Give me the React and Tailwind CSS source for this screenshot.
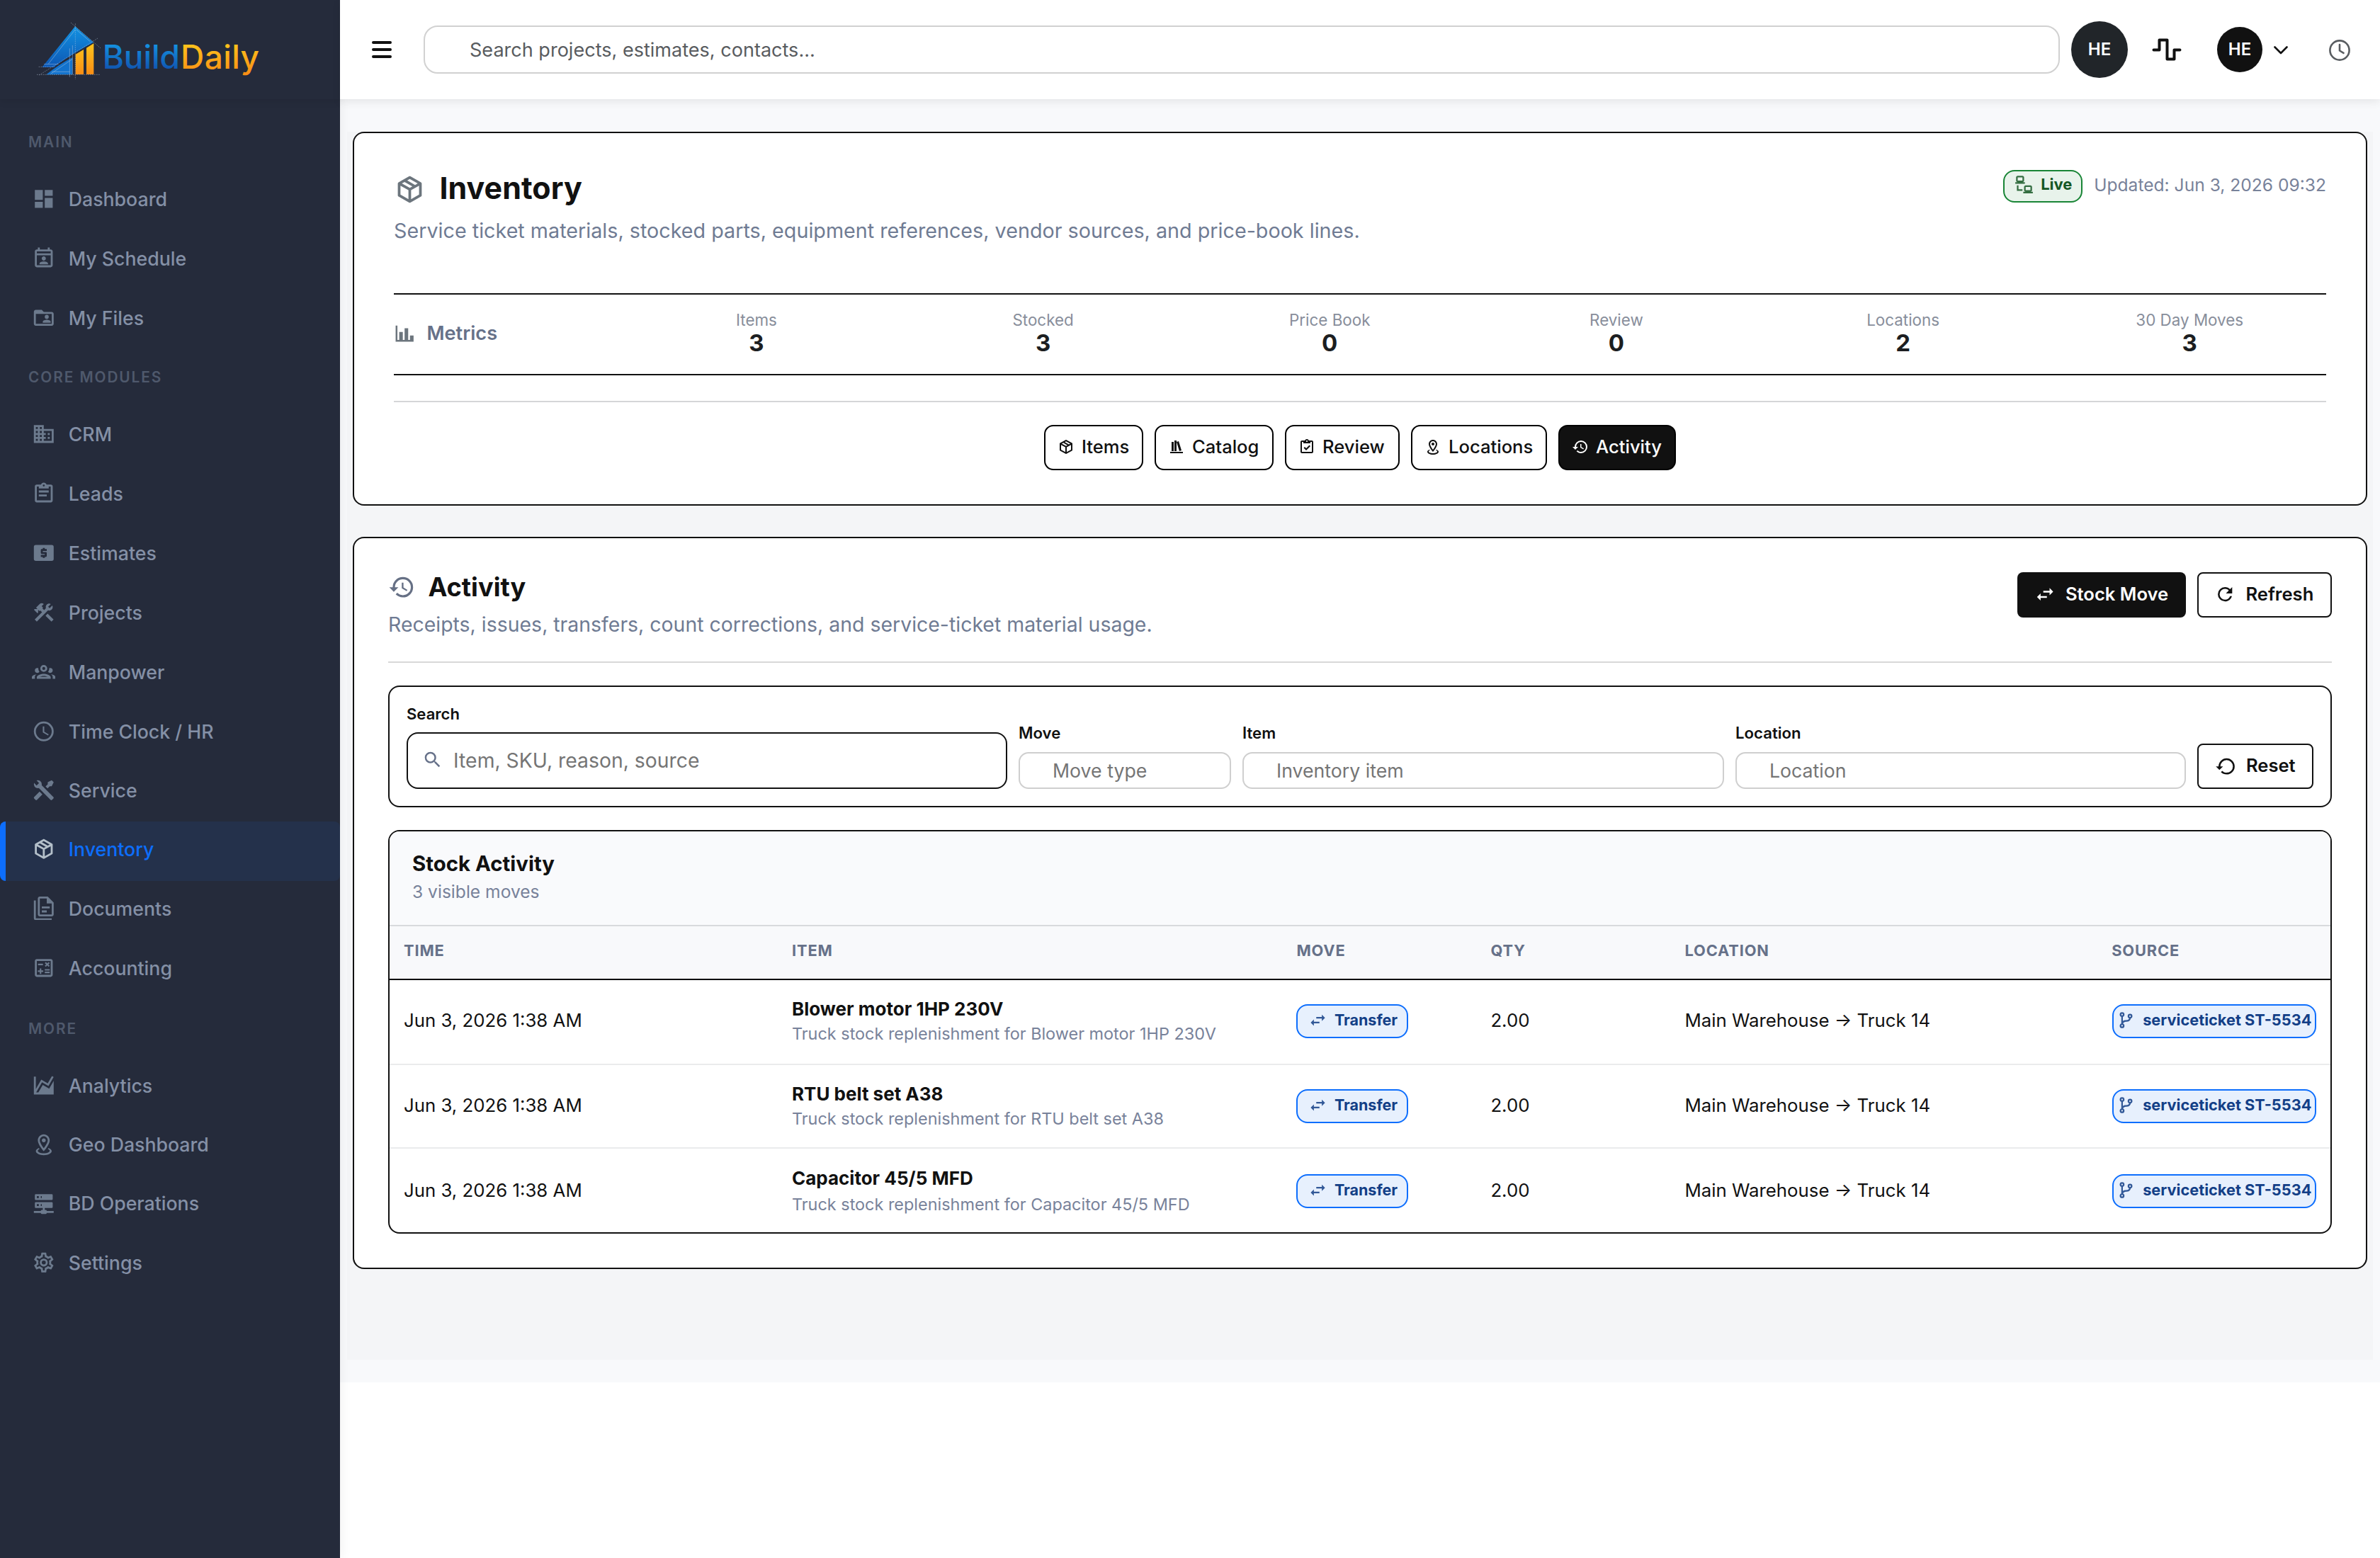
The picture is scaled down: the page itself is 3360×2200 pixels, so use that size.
import React from "react";

const ICONS = {
  scheduleAccount:
    "M19 3H18V1H16V3H8V1H6V3H5C3.9 3 3 3.9 3 5V19C3 20.1 3.9 21 5 21H19C20.1 21 21 20.1 21 19V5C21 3.9 20.1 3 19 3M19 19H5V9H19V19M5 7V5H19V7H5M12 10C13.1 10 14.1 10.9 14.1 12.1S13.1 14.2 12 14.2 9.9 13.2 9.9 12.1 10.9 10 12 10M7.7 18V17.3C7.7 15.9 9.6 15.2 12 15.2S16.3 15.9 16.3 17.3V18H7.7Z",
  business:
    "M12 7V3H2v18h20V7H12zM6 19H4v-2h2v2zm0-4H4v-2h2v2zm0-4H4V9h2v2zm0-4H4V5h2v2zm4 12H8v-2h2v2zm0-4H8v-2h2v2zm0-4H8V9h2v2zm0-4H8V5h2v2zm10 12h-8v-2h2v-2h-2v-2h2v-2h-2V9h8v10zm-2-8h-2v2h2v-2zm0 4h-2v2h2v-2z",
  clipboardText:
    "M19,3H14.82C14.4,1.84 13.3,1 12,1C10.7,1 9.6,1.84 9.18,3H5A2,2 0 0,0 3,5V19A2,2 0 0,0 5,21H19A2,2 0 0,0 21,19V5A2,2 0 0,0 19,3M12,3A1,1 0 0,1 13,4A1,1 0 0,1 12,5A1,1 0 0,1 11,4A1,1 0 0,1 12,3M7,7H17V5H19V19H5V5H7V7M17,11H7V9H17V11M15,15H7V13H15V15Z",
  cash:
    "M4 4H20A2 2 0 0 1 22 6V18A2 2 0 0 1 20 20H4A2 2 0 0 1 2 18V6A2 2 0 0 1 4 4M11 17h2v-1h1c.55 0 1-.45 1-1v-3c0-.55-.45-1-1-1h-3v-1h4V8h-2V7h-2v1h-1c-.55 0-1 .45-1 1v3c0 .55.45 1 1 1h3v1H9v2h2v1z",
  hammerWrench:
    "M13.78 15.3L19.78 21.3L21.89 19.14L15.89 13.14L13.78 15.3M17.5 10.1C17.11 10.1 16.69 10.05 16.36 9.91L4.97 21.25L2.86 19.14L10.27 11.74L8.5 9.96L7.78 10.66L6.33 9.25V12.11L5.63 12.81L2.11 9.25L2.81 8.55H5.62L4.22 7.14L7.78 3.58C8.95 2.41 10.83 2.41 12 3.58L9.89 5.74L11.3 7.14L10.59 7.85L12.38 9.63L14.2 7.75C14.06 7.42 14 7 14 6.63C14 4.66 15.56 3.11 17.5 3.11C18.09 3.11 18.61 3.25 19.08 3.53L16.41 6.2L17.91 7.7L20.58 5.03C20.86 5.5 21 6 21 6.63C21 8.55 19.45 10.1 17.5 10.1Z",
  group:
    "M12,5A3.5,3.5 0 0,0 8.5,8.5A3.5,3.5 0 0,0 12,12A3.5,3.5 0 0,0 15.5,8.5A3.5,3.5 0 0,0 12,5M12,7A1.5,1.5 0 0,1 13.5,8.5A1.5,1.5 0 0,1 12,10A1.5,1.5 0 0,1 10.5,8.5A1.5,1.5 0 0,1 12,7M5.5,8A2.5,2.5 0 0,0 3,10.5C3,11.44 3.53,12.25 4.29,12.68C4.65,12.88 5.06,13 5.5,13C5.94,13 6.35,12.88 6.71,12.68C7.08,12.47 7.39,12.17 7.62,11.81C6.89,10.86 6.5,9.7 6.5,8.5C6.5,8.41 6.5,8.31 6.5,8.22C6.2,8.08 5.86,8 5.5,8M18.5,8C18.14,8 17.8,8.08 17.5,8.22C17.5,8.31 17.5,8.41 17.5,8.5C17.5,9.7 17.11,10.86 16.38,11.81C16.5,12 16.63,12.15 16.78,12.3C16.94,12.45 17.1,12.58 17.29,12.68C17.65,12.88 18.06,13 18.5,13C18.94,13 19.35,12.88 19.71,12.68C20.47,12.25 21,11.44 21,10.5A2.5,2.5 0 0,0 18.5,8M12,14C9.66,14 5,15.17 5,17.5V19H19V17.5C19,15.17 14.34,14 12,14M4.71,14.55C2.78,14.78 0,15.76 0,17.5V19H3V17.07C3,16.06 3.69,15.22 4.71,14.55M19.29,14.55C20.31,15.22 21,16.06 21,17.07V19H24V17.5C24,15.76 21.22,14.78 19.29,14.55M12,16C13.53,16 15.24,16.5 16.23,17H7.77C8.76,16.5 10.47,16 12,16Z",
  clock:
    "M12,20A8,8 0 0,0 20,12A8,8 0 0,0 12,4A8,8 0 0,0 4,12A8,8 0 0,0 12,20M12,2A10,10 0 0,1 22,12A10,10 0 0,1 12,22C6.47,22 2,17.5 2,12A10,10 0 0,1 12,2M12.5,7V12.25L17,14.92L16.25,16.15L11,13V7H12.5Z",
  tools:
    "M21.71 20.29L20.29 21.71A1 1 0 0 1 18.88 21.71L7 9.85A3.81 3.81 0 0 1 6 10A4 4 0 0 1 2.22 4.7L4.76 7.24L5.29 6.71L6.71 5.29L7.24 4.76L4.7 2.22A4 4 0 0 1 10 6A3.81 3.81 0 0 1 9.85 7L21.71 18.88A1 1 0 0 1 21.71 20.29M2.29 18.88A1 1 0 0 0 2.29 20.29L3.71 21.71A1 1 0 0 0 5.12 21.71L10.59 16.25L7.76 13.42M20 2L16 4V6L13.83 8.17L15.83 10.17L18 8H20L22 4Z",
  box:
    "M21,16.5C21,16.88 20.79,17.21 20.47,17.38L12.57,21.82C12.41,21.94 12.21,22 12,22C11.79,22 11.59,21.94 11.43,21.82L3.53,17.38C3.21,17.21 3,16.88 3,16.5V7.5C3,7.12 3.21,6.79 3.53,6.62L11.43,2.18C11.59,2.06 11.79,2 12,2C12.21,2 12.41,2.06 12.57,2.18L20.47,6.62C20.79,6.79 21,7.12 21,7.5V16.5M12,4.15L10.11,5.22L16,8.61L17.96,7.5L12,4.15M6.04,7.5L12,10.85L13.96,9.75L8.08,6.35L6.04,7.5M5,15.91L11,19.29V12.58L5,9.21V15.91M19,15.91V9.21L13,12.58V19.29L19,15.91Z",
  files:
    "M16 0H8C6.9 0 6 .9 6 2V18C6 19.1 6.9 20 8 20H20C21.1 20 22 19.1 22 18V6L16 0M20 18H8V2H15V7H20V18M4 4V22H20V24H4C2.9 24 2 23.1 2 22V4H4M10 10V12H18V10H10M10 14V16H15V14H10Z",
  calculator:
    "M19,3H5C3.9,3 3,3.9 3,5V19C3,20.1 3.9,21 5,21H19C20.1,21 21,20.1 21,19V5C21,3.9 20.1,3 19,3M19,19H5V5H19V19M6.2,7.7H11.2V9.2H6.2V7.7M13,15.8H18V17.3H13V15.8M13,13.2H18V14.7H13V13.2M8,18H9.5V16H11.5V14.5H9.5V12.5H8V14.5H6V16H8V18M14.1,10.9L15.5,9.5L16.9,10.9L18,9.9L16.6,8.5L18,7.1L16.9,6L15.5,7.4L14.1,6L13,7.1L14.4,8.5L13,9.9L14.1,10.9Z",
  areaChart:
    "M17.45,15.18L22,7.31V21H2V3H4V15.54L9.5,6L16,9.78L20.24,2.45L21.97,3.45L16.74,12.5L10.23,8.75L4.31,19H6.57L10.96,11.44L17.45,15.18Z",
  mapMarker:
    "M12 4C14.2 4 16 5.8 16 8C16 10.1 13.9 13.5 12 15.9C10.1 13.4 8 10.1 8 8C8 5.8 9.8 4 12 4M12 2C8.7 2 6 4.7 6 8C6 12.5 12 19 12 19S18 12.4 18 8C18 4.7 15.3 2 12 2M12 6C10.9 6 10 6.9 10 8S10.9 10 12 10 14 9.1 14 8 13.1 6 12 6M20 19C20 21.2 16.4 23 12 23S4 21.2 4 19C4 17.7 5.2 16.6 7.1 15.8L7.7 16.7C6.7 17.2 6 17.8 6 18.5C6 19.9 8.7 21 12 21S18 19.9 18 18.5C18 17.8 17.3 17.2 16.2 16.7L16.8 15.8C18.8 16.6 20 17.7 20 19Z",
  server:
    "M13,19H14A1,1 0 0,1 15,20H22V22H15A1,1 0 0,1 14,23H10A1,1 0 0,1 9,22H2V20H9A1,1 0 0,1 10,19H11V17H4A1,1 0 0,1 3,16V12A1,1 0 0,1 4,11H20A1,1 0 0,1 21,12V16A1,1 0 0,1 20,17H13V19M4,3H20A1,1 0 0,1 21,4V8A1,1 0 0,1 20,9H4A1,1 0 0,1 3,8V4A1,1 0 0,1 4,3M9,7H10V5H9V7M9,15H10V13H9V15M5,5V7H7V5H5M5,13V15H7V13H5Z",
  cog:
    "M12,8A4,4 0 0,1 16,12A4,4 0 0,1 12,16A4,4 0 0,1 8,12A4,4 0 0,1 12,8M12,10A2,2 0 0,0 10,12A2,2 0 0,0 12,14A2,2 0 0,0 14,12A2,2 0 0,0 12,10M10,22C9.75,22 9.54,21.82 9.5,21.58L9.13,18.93C8.5,18.68 7.96,18.34 7.44,17.94L4.95,18.95C4.73,19.03 4.46,18.95 4.34,18.73L2.34,15.27C2.21,15.05 2.27,14.78 2.46,14.63L4.57,12.97L4.5,12L4.57,11L2.46,9.37C2.27,9.22 2.21,8.95 2.34,8.73L4.34,5.27C4.46,5.05 4.73,4.96 4.95,5.05L7.44,6.05C7.96,5.66 8.5,5.32 9.13,5.07L9.5,2.42C9.54,2.18 9.75,2 10,2H14C14.25,2 14.46,2.18 14.5,2.42L14.87,5.07C15.5,5.32 16.04,5.66 16.56,6.05L19.05,5.05C19.27,4.96 19.54,5.05 19.66,5.27L21.66,8.73C21.79,8.95 21.73,9.22 21.54,9.37L19.43,11L19.5,12L19.43,13L21.54,14.63C21.73,14.78 21.79,15.05 21.66,15.27L19.66,18.73C19.54,18.95 19.27,19.04 19.05,18.95L16.56,17.95C16.04,18.34 15.5,18.68 14.87,18.93L14.5,21.58C14.46,21.82 14.25,22 14,22H10M11.25,4L10.88,6.61C9.68,6.86 8.62,7.5 7.85,8.39L5.44,7.35L4.69,8.65L6.8,10.2C6.4,11.37 6.4,12.64 6.8,13.8L4.68,15.36L5.43,16.66L7.86,15.62C8.63,16.5 9.68,17.14 10.87,17.38L11.24,20H12.76L13.13,17.39C14.32,17.14 15.37,16.5 16.14,15.62L18.57,16.66L19.32,15.36L17.2,13.81C17.6,12.64 17.6,11.37 17.2,10.2L19.31,8.65L18.56,7.35L16.15,8.39C15.38,7.5 14.32,6.86 13.12,6.62L12.75,4H11.25Z",
  dashboard: "M13,3V9H21V3M13,21H21V11H13M3,21H11V15H3M3,13H11V3H3V13Z",
  barChart: "M22,21H2V3H4V19H6V10H10V19H12V6H16V19H18V14H22V21Z",
  bookshelf: "M9 3V18H12V3H9M12 5L16 18L19 17L15 4L12 5M5 5V18H8V5H5M3 19V21H21V19H3Z",
  clipboardCheck:
    "M19 3H14.82C14.4 1.84 13.3 1 12 1S9.6 1.84 9.18 3H5C3.9 3 3 3.9 3 5V19C3 20.1 3.9 21 5 21H19C20.1 21 21 20.1 21 19V5C21 3.9 20.1 3 19 3M12 3C12.55 3 13 3.45 13 4S12.55 5 12 5 11 4.55 11 4 11.45 3 12 3M7 7H17V5H19V19H5V5H7V7M7.5 13.5L9 12L11 14L15.5 9.5L17 11L11 17L7.5 13.5Z",
  history:
    "M13.5,8H12V13L16.28,15.54L17,14.33L13.5,12.25V8M13,3A9,9 0 0,0 4,12H1L4.96,16.03L9,12H6A7,7 0 0,1 13,5A7,7 0 0,1 20,12A7,7 0 0,1 13,19C11.07,19 9.32,18.21 8.06,16.94L6.64,18.36C8.27,20 10.5,21 13,21A9,9 0 0,0 22,12A9,9 0 0,0 13,3",
  restore:
    "M13,3A9,9 0 0,0 4,12H1L4.96,16.03L9,12H6A7,7 0 0,1 13,5A7,7 0 0,1 20,12A7,7 0 0,1 13,19C11.07,19 9.32,18.21 8.06,16.94L6.64,18.36C8.27,20 10.5,21 13,21A9,9 0 0,0 22,12A9,9 0 0,0 13,3",
  swap: "M21,9L17,5V8H10V10H17V13M7,11L3,15L7,19V16H14V14H7V11Z",
  refresh:
    "M17.65,6.35C16.2,4.9 14.21,4 12,4A8,8 0 0,0 4,12A8,8 0 0,0 12,20C15.73,20 18.84,17.45 19.73,14H17.65C16.83,16.33 14.61,18 12,18A6,6 0 0,1 6,12A6,6 0 0,1 12,6C13.66,6 15.14,6.69 16.22,7.78L13,11H20V4L17.65,6.35Z",
  magnify:
    "M9.5,3A6.5,6.5 0 0,1 16,9.5C16,11.11 15.41,12.59 14.44,13.73L14.71,14H15.5L20.5,19L19,20.5L14,15.5V14.71L13.73,14.44C12.59,15.41 11.11,16 9.5,16A6.5,6.5 0 0,1 3,9.5A6.5,6.5 0 0,1 9.5,3M9.5,5C7,5 5,7 5,9.5C5,12 7,14 9.5,14C12,14 14,12 14,9.5C14,7 12,5 9.5,5Z",
  branch:
    "M13,14C9.64,14 8.54,15.35 8.18,16.24C9.25,16.7 10,17.76 10,19A3,3 0 0,1 7,22A3,3 0 0,1 4,19C4,17.69 4.83,16.58 6,16.17V7.83C4.83,7.42 4,6.31 4,5A3,3 0 0,1 7,2A3,3 0 0,1 10,5C10,6.31 9.17,7.42 8,7.83V13.12C8.88,12.47 10.16,12 12,12C14.67,12 15.56,10.66 15.85,9.77C14.77,9.32 14,8.25 14,7A3,3 0 0,1 17,4A3,3 0 0,1 20,7C20,8.34 19.12,9.5 17.91,9.86C17.65,11.29 16.68,14 13,14M7,18A1,1 0 0,0 6,19A1,1 0 0,0 7,20A1,1 0 0,0 8,19A1,1 0 0,0 7,18M7,4A1,1 0 0,0 6,5A1,1 0 0,0 7,6A1,1 0 0,0 8,5A1,1 0 0,0 7,4M17,6A1,1 0 0,0 16,7A1,1 0 0,0 17,8A1,1 0 0,0 18,7A1,1 0 0,0 17,6Z",
  lan:
    "M4,1C2.89,1 2,1.89 2,3V7C2,8.11 2.89,9 4,9H1V11H13V9H10C11.11,9 12,8.11 12,7V3C12,1.89 11.11,1 10,1H4M4,3H10V7H4V3M3,13V18L3,20H10V18H5V13H3M14,13C12.89,13 12,13.89 12,15V19C12,20.11 12.89,21 14,21H11V23H23V21H20C21.11,21 22,20.11 22,19V15C22,13.89 21.11,13 20,13H14M14,15H20V19H14V15Z",
};

function Icon({ name, className }) {
  return (
    <svg viewBox="0 0 24 24" fill="currentColor" fillRule="evenodd" className={`shrink-0 ${className}`}>
      {name === "folderAccount" ? (
        <>
          <path d="M20 6H12L10 4H4C2.9 4 2 4.9 2 6V18C2 19.1 2.9 20 4 20H20C21.1 20 22 19.1 22 18V8C22 6.9 21.1 6 20 6M20 18H4V8H20V18Z" />
          <circle cx="15" cy="11" r="2" />
          <path d="M11 17V16C11 14.7 13.7 14 15 14S19 14.7 19 16V17H11Z" />
        </>
      ) : (
        <path d={ICONS[name]} />
      )}
    </svg>
  );
}

function Logo() {
  return (
    <svg viewBox="0 0 1020 330" className="h-[110px] w-[340px]">
      <defs>
        <linearGradient id="blue" x1="0" y1="0" x2="0" y2="1">
          <stop offset="0" stopColor="#1292e2" />
          <stop offset="1" stopColor="#0d57b4" />
        </linearGradient>
        <linearGradient id="blueText" gradientUnits="userSpaceOnUse" x1="0" y1="130" x2="0" y2="235">
          <stop offset="0" stopColor="#1590e0" />
          <stop offset="1" stopColor="#1055b0" />
        </linearGradient>
        <linearGradient id="gold" gradientUnits="userSpaceOnUse" x1="0" y1="128" x2="0" y2="256">
          <stop offset="0" stopColor="#fdc31c" />
          <stop offset="1" stopColor="#f98d15" />
        </linearGradient>
      </defs>
      <path d="M198 52L276 119Q190 165 122 214L109 225H58Z" fill="url(#blue)" />
      <path d="M76 256Q130 212 187 183V256Z" fill="#1272cc" />
      <path d="M200 255V170L234 150V255ZM246 255V143L277 124V255Z" fill="url(#gold)" />
      <g stroke="#c3d2e4" strokeWidth="2" fill="none" opacity="0.65">
        <path d="M36 256H302M199 40V276M180 36L306 144M44 223H110M46 258L294 102" strokeDasharray="5 4" />
        <path d="M66 212H128M100 244H176M187 132V256M175 145V266M198 66L84 212M204 66L262 116M96 252L187 190" />
      </g>
      <text x="314" y="232" fontFamily="Inter, sans-serif" fontSize="138" fontWeight="500" textLength="328" fill="url(#blueText)">Build</text>
      <text x="645" y="232" fontFamily="Inter, sans-serif" fontSize="138" fontWeight="500" textLength="333" fill="url(#gold)">Daily</text>
    </svg>
  );
}

const NAV_MAIN = [
  ["dashboard", "Dashboard"],
  ["scheduleAccount", "My Schedule"],
  ["folderAccount", "My Files"],
];
const NAV_CORE = [
  ["business", "CRM"],
  ["clipboardText", "Leads"],
  ["cash", "Estimates"],
  ["hammerWrench", "Projects"],
  ["group", "Manpower"],
  ["clock", "Time Clock / HR"],
  ["tools", "Service", "h-[82px]"],
  ["box", "Inventory"],
  ["files", "Documents"],
  ["calculator", "Accounting"],
];
const NAV_MORE = [
  ["areaChart", "Analytics"],
  ["mapMarker", "Geo Dashboard", "h-[82px]"],
  ["server", "BD Operations"],
  ["cog", "Settings"],
];

function NavItem({ icon, label, height = "h-[84px]" }) {
  const active = label === "Inventory";
  return (
    <a
      className={`flex items-center pb-[7px] text-[26.7px] font-medium leading-8 ${height} ${
        active
          ? "rounded-lg border-l-8 border-[#0d6efd] bg-[#24314b] pl-[36.8px] text-[#0d6efd]"
          : "pl-[44.8px] text-[#8490a6]"
      }`}
    >
      <Icon name={icon} className={`mr-[18.4px] size-[33.6px] ${active ? "text-[#b3bfc9]" : "text-[#6c7a8d]"}`} />
      {label}
    </a>
  );
}

function NavSection({ title, items, className }) {
  return (
    <div>
      <h3 className={`flex items-center pl-10 text-[20.8px] font-semibold tracking-[0.093em] text-[#4f596c] ${className}`}>
        {title}
      </h3>
      {items.map(([icon, label, height]) => (
        <NavItem key={label} icon={icon} label={label} height={height} />
      ))}
    </div>
  );
}

function Sidebar() {
  return (
    <aside className="relative z-10 h-[2200px] w-[480px] shrink-0 bg-[#252b3b] shadow-[2px_0_16px_rgba(0,0,0,0.06)]">
      <div className="h-[140px] pl-10 pt-5 shadow-[0_4px_10px_rgba(0,0,0,0.07)]">
        <Logo />
      </div>
      <nav className="pt-[22px]">
        <NavSection title="MAIN" items={NAV_MAIN} className="h-20 pb-0.5" />
        <NavSection title="CORE MODULES" items={NAV_CORE} className="h-20 pb-0.5" />
        <NavSection title="MORE" items={NAV_MORE} className="h-[82px]" />
      </nav>
    </aside>
  );
}

function Header() {
  return (
    <header className="relative z-20 flex h-[140px] items-center bg-white pl-[45px] shadow-[0_4px_12px_rgba(0,0,0,0.08)]">
      <svg viewBox="0 0 28 24" className="h-6 w-7 shrink-0" stroke="#111" strokeWidth="4" strokeLinecap="round">
        <path d="M2 2H26M2 12H26M2 22H26" />
      </svg>
      <div className="ml-[45px] flex h-[68px] w-[2310px] shrink-0 items-center rounded-[20px] border-2 border-[#d1d1d1] pl-[63px] pt-0.5 text-[27.05px] text-[#595c5f]">
        Search projects, estimates, contacts...
      </div>
      <div className="ml-4 flex size-20 shrink-0 items-center justify-center rounded-full bg-[#212529] text-2xl font-semibold text-white">
        HE
      </div>
      <svg viewBox="0 0 42 32" className="ml-[33.5px] h-8 w-[42px] shrink-0" fill="none" stroke="#111" strokeWidth="4" strokeLinecap="round" strokeLinejoin="round">
        <path d="M2.5 16.5H10.5V2.5H21.5V29.5H31.5V16.5H39.5" />
      </svg>
      <div className="ml-[50.5px] flex size-16 shrink-0 items-center justify-center rounded-full bg-[#111] text-2xl font-semibold text-white">
        HE
      </div>
      <svg viewBox="0 0 20 12" className="ml-[15.5px] mt-0.5 h-3 w-5 shrink-0" fill="none" stroke="#111" strokeWidth="2.6" strokeLinecap="round" strokeLinejoin="round">
        <path d="M1.5 1.5L10 10L18.5 1.5" />
      </svg>
      <svg viewBox="0 0 32 32" className="ml-[57px] mt-0.5 size-8 shrink-0" fill="none" stroke="#595d61" strokeWidth="2.6" strokeLinecap="round" strokeLinejoin="round">
        <circle cx="16" cy="16" r="13.6" />
        <path d="M16 8V16.5L21.5 19.8" />
      </svg>
    </header>
  );
}

const METRICS = [
  ["Items", "3"],
  ["Stocked", "3"],
  ["Price Book", "0"],
  ["Review", "0"],
  ["Locations", "2"],
  ["30 Day Moves", "3"],
];
const TABS = [
  ["box", "Items", "w-[140px]"],
  ["bookshelf", "Catalog", "w-[168px]"],
  ["clipboardCheck", "Review", "w-[162px]"],
  ["mapMarker", "Locations", "w-[192px]"],
  ["history", "Activity", "w-[166px]"],
];

function InventoryCard() {
  return (
    <section className="h-[528px] rounded-2xl border-2 border-[#111] bg-white px-14 pt-[51px]">
      <div className="flex items-start justify-between">
        <div>
          <h1 className="flex h-14 items-center text-[43px] font-bold text-[#111]">
            <Icon name="box" className="mr-[19.5px] size-[45px] text-[#6c757d]" />
            <span className="pb-1">Inventory</span>
          </h1>
          <p className="mt-[13px] text-[28.73px] leading-9 text-[#6f7b93]">
            Service ticket materials, stocked parts, equipment references, vendor sources, and price-book lines.
          </p>
        </div>
        <div className="flex items-start gap-4">
          <span className="mt-px flex h-[46px] w-28 items-center gap-[10px] rounded-2xl border-2 border-[#198536] bg-[#e8f3eb] pb-[5px] pl-3.5 text-[22px] font-bold text-[#155724]">
            <Icon name="lan" className="size-[27px] opacity-85" />
            Live
          </span>
          <span className="mt-1 text-[24.6px] leading-9 text-[#78829a]">Updated: Jun 3, 2026 09:32</span>
        </div>
      </div>

      <div className="mt-[70px] grid h-[116px] grid-cols-[300px_repeat(6,1fr)] items-center gap-x-[19.2px] border-y-2 border-[#111]">
        <div className="flex items-center pb-0.5 text-[27.2px] font-semibold text-[#667189]">
          <Icon name="barChart" className="mr-4 size-[30.4px] text-[#6c757d]" />
          Metrics
        </div>
        {METRICS.map(([label, value]) => (
          <div key={label} className="pb-2 text-center">
            <div className="text-[22.4px] leading-8 text-[#888e9b]">{label}</div>
            <div className="text-[33px] font-bold leading-8 text-[#1c1e21]">{value}</div>
          </div>
        ))}
      </div>

      <div className="mt-9 flex justify-center gap-4 border-t-2 border-[#d5d6d8] pt-8">
        {TABS.map(([icon, label, width]) => (
          <button
            key={label}
            className={`flex h-16 items-center gap-[10px] rounded-[13px] border-2 border-black pb-0.5 pl-[17px] text-[25.6px] font-medium ${width} ${
              label === "Activity" ? "bg-[#111] text-white" : "bg-white text-[#111]"
            }`}
          >
            <Icon name={icon} className="size-6" />
            {label}
          </button>
        ))}
      </div>
    </section>
  );
}

function SelectField({ label, placeholder }) {
  return (
    <div>
      <div className="mb-[13px] text-[22.2px] font-semibold leading-7 text-[#111]">{label}</div>
      <div className="flex h-[52px] items-center rounded-[14px] border-2 border-[#cfcfcf] pl-[46px] pt-px text-[26.7px] text-[#757575]">
        {placeholder}
      </div>
    </div>
  );
}

const ROWS = [
  { item: "Blower motor 1HP 230V", row: "h-[120px] border-b-2 pb-1", text: "mt-0.5", title: "leading-9" },
  { item: "RTU belt set A38", row: "h-[118px] border-b-2 pb-0.5", text: "mt-0.5", title: "leading-9" },
  { item: "Capacitor 45/5 MFD", row: "h-[118px]", text: "-mt-px", title: "leading-10" },
];

function StockTable() {
  return (
    <div className="mt-8 overflow-hidden rounded-2xl border-2 border-[#111]">
      <div className="h-[134px] border-b-2 border-[#d8dadd] bg-[#f9fafc] pl-8 pt-[30px]">
        <h3 className="text-[29.4px] font-bold leading-8 text-[#111]">Stock Activity</h3>
        <p className="mt-[9px] text-[24.6px] leading-7 text-[#78829a]">3 visible moves</p>
      </div>
      <div className="grid h-[76px] grid-cols-[20%_26%_10%_10%_22%_12%] items-center border-b-2 border-black bg-[#f8f9fb] pb-1.5 text-[21.8px] font-bold tracking-[0.04em] text-[#667189]">
        {["TIME", "ITEM", "MOVE", "QTY", "LOCATION", "SOURCE"].map((name) => (
          <div key={name} className="pl-5">
            {name}
          </div>
        ))}
      </div>
      {ROWS.map(({ item, row, text, title }) => (
        <div
          key={item}
          className={`grid grid-cols-[20%_26%_10%_10%_22%_12%] items-center border-[#eaebec] text-[25.8px] text-[#111] ${row}`}
        >
          <div className="pl-5">Jun 3, 2026 1:38 AM</div>
          <div className={`pl-5 ${text}`}>
            <div className={`text-[26px] font-bold ${title}`}>{item}</div>
            <div className="text-[23.43px] leading-[34px] text-[#78829a]">Truck stock replenishment for {item}</div>
          </div>
          <div className="pl-5">
            <span className="mt-0.5 flex h-12 w-[158px] items-center gap-[10px] rounded-2xl border-2 border-[#0d6efd] bg-[#e7f0fd] pb-[3px] pl-[14.5px] text-[21.5px] font-bold text-[#133f87]">
              <Icon name="swap" className="size-[27px] opacity-85" />
              Transfer
            </span>
          </div>
          <div className="pl-5">2.00</div>
          <div className="pl-5">Main Warehouse → Truck 14</div>
          <div className="pl-[21px]">
            <span className="mt-0.5 flex h-12 w-[288px] items-center gap-[10px] whitespace-nowrap rounded-2xl border-2 border-[#0d6efd] bg-[#e7f0fd] pb-[3px] pl-[4px] text-[21.75px] font-bold text-[#133f87]">
              <Icon name="branch" className="size-[27px] opacity-85" />
              serviceticket ST-5534
            </span>
          </div>
        </div>
      ))}
    </div>
  );
}

function ActivityCard() {
  return (
    <section className="mt-11 h-[1034px] rounded-2xl border-2 border-[#111] bg-white px-12 pt-[45px]">
      <div className="flex h-[131px] items-start justify-between border-b-2 border-[#d8d8d8]">
        <div>
          <h2 className="flex h-12 items-center text-[36.2px] font-bold text-[#111]">
            <Icon name="history" className="mr-[18px] size-[38.4px] text-[#667085]" />
            Activity
          </h2>
          <p className="mt-[11px] text-[28.45px] leading-9 text-[#6f7b93]">
            Receipts, issues, transfers, count corrections, and service-ticket material usage.
          </p>
        </div>
        <div className="mt-[3px] flex gap-4 text-[25.6px] font-semibold">
          <button className="flex h-16 w-[238px] items-center gap-[13.5px] rounded-lg bg-[#111] pb-0.5 pl-6 text-white">
            <Icon name="swap" className="size-[30.4px]" />
            Stock Move
          </button>
          <button className="flex h-16 w-[190px] items-center gap-[14px] rounded-lg border-2 border-[#111] pb-0.5 pl-[22px] text-[#111]">
            <Icon name="refresh" className="size-[30.4px]" />
            Refresh
          </button>
        </div>
      </div>

      <div className="mt-8 grid h-[172px] grid-cols-[848px_300px_680px_636px_164px] items-end gap-4 rounded-2xl border-2 border-[#111] px-6 pb-6">
        <div>
          <div className="mb-3 text-[22.1px] font-semibold leading-7 text-[#111]">Search</div>
          <div className="flex h-20 items-center rounded-2xl border-2 border-[#111] pl-5 text-[28.35px] text-[#757575]">
            <Icon name="magnify" className="mr-[14.5px] size-[29.6px] -translate-y-px text-[#667189]" />
            Item, SKU, reason, source
          </div>
        </div>
        <SelectField label="Move" placeholder="Move type" />
        <SelectField label="Item" placeholder="Inventory item" />
        <SelectField label="Location" placeholder="Location" />
        <button className="flex h-16 w-[164px] items-center gap-[13.5px] rounded-lg border-2 border-[#111] pl-[23px] text-[25.6px] font-semibold text-[#111]">
          <Icon name="restore" className="size-[30.4px]" />
          <span className="pb-0.5">Reset</span>
        </button>
      </div>

      <StockTable />
    </section>
  );
}

export default function App() {
  return (
    <div className="flex h-[2200px] w-[3360px] bg-white font-['Inter',sans-serif]">
      <Sidebar />
      <div className="relative flex-1">
        <Header />
        <main className="h-[1812px] bg-[#f8f9fb] px-2.5 pt-[46px]">
          <div className="h-[1734px] bg-[#f4f5f7] px-2">
            <InventoryCard />
            <ActivityCard />
          </div>
        </main>
      </div>
    </div>
  );
}
